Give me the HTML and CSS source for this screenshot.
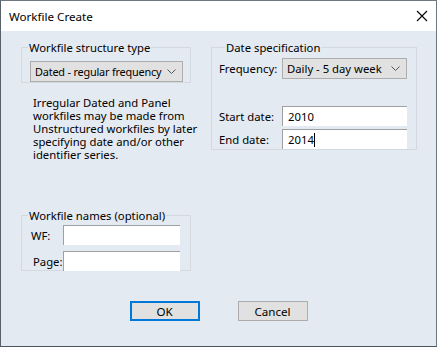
FILE: index.html
```html
<!DOCTYPE html>
<html lang="en">
<head>
  <meta charset="UTF-8">
  <title>Workfile Create</title>
  <link rel="stylesheet" href="styles.css">
</head>
<body>
  <div class="window">
    <div class="titlebar">
      <span class="title">Workfile Create</span>
      <svg class="close" width="12" height="12" viewBox="0 0 12 12">
        <path d="M1 1 L11 11 M11 1 L1 11" stroke="#000" stroke-width="1.1" fill="none"/>
      </svg>
    </div>

    <div class="content">
      <div class="top">
        <div class="left">
          <fieldset class="group structure">
            <legend>Workfile structure type</legend>
            <div class="combo wide">
              <span>Dated - regular frequency</span>
              <svg width="9" height="5" viewBox="0 0 9 5"><path d="M0.5 0.5 L4.5 4.5 L8.5 0.5" stroke="#555" fill="none"/></svg>
            </div>
          </fieldset>
          <p class="note">Irregular Dated and Panel<br>workfiles may be made from<br>Unstructured workfiles by later<br>specifying date and/or other<br>identifier series.</p>
        </div>

        <fieldset class="group dates">
          <legend>Date specification</legend>
          <div class="row">
            <label>Frequency:</label>
            <div class="combo freq">
              <span>Daily - 5 day week</span>
              <svg width="9" height="5" viewBox="0 0 9 5"><path d="M0.5 0.5 L4.5 4.5 L8.5 0.5" stroke="#555" fill="none"/></svg>
            </div>
          </div>
          <div class="row start">
            <label>Start date:</label>
            <div class="edit date">2010</div>
          </div>
          <div class="row end">
            <label>End date:</label>
            <div class="edit date">2014<span class="caret"></span></div>
          </div>
        </fieldset>
      </div>

      <fieldset class="group names">
        <legend>Workfile names (optional)</legend>
        <div class="row">
          <label class="wf">WF:</label>
          <div class="edit name"></div>
        </div>
        <div class="row page">
          <label class="pg">Page:</label>
          <div class="edit name"></div>
        </div>
      </fieldset>

      <div class="buttons">
        <button class="btn default">OK</button>
        <button class="btn">Cancel</button>
      </div>
    </div>
  </div>
</body>
</html>
```

FILE: styles.css
```css
body {
  margin: 0;
  font-family: 'Noto Sans', 'Liberation Sans', sans-serif;
  font-size: 11.3px;
  color: #000;
}

.window {
  width: 437px;
  height: 347px;
  box-sizing: border-box;
  border: 1px solid #6f7780;
  border-bottom-color: #4a5560;
  border-left-color: #56616c;
  background: #e4eaf2;
  display: flex;
  flex-direction: column;
}

.titlebar {
  height: 30px;
  background: #ffffff;
  display: flex;
  align-items: center;
  justify-content: space-between;
  padding: 0 8px 0 8px;
  flex-shrink: 0;
}

.title {
  font-size: 11.6px;
  color: #000;
}

.content {
  padding: 9px 0 0 20px;
  display: flex;
  flex-direction: column;
}

.top {
  display: flex;
  height: 154px;
}

.left {
  width: 170px;
}

fieldset.group {
  margin: 0;
  border: 1px solid #d3d9df;
  padding: 0;
  min-width: 0;
}

fieldset.group legend {
  padding: 0 1px;
  margin-left: 6px;
  line-height: 15px;
  white-space: nowrap;
}

.structure {
  width: 170px;
  height: 43px;
  box-sizing: border-box;
}

.combo {
  height: 21px;
  box-sizing: border-box;
  background: #e1e1e1;
  border: 1px solid #adadad;
  display: flex;
  align-items: center;
  justify-content: space-between;
  padding: 0 6px 0 4px;
  white-space: nowrap;
}

.combo.wide {
  width: 153px;
  margin: 6px 0 0 8px;
  font-size: 10.9px;
  letter-spacing: -0.2px;
}

.combo.freq {
  width: 125px;
}

.note {
  margin: 13px 0 0 12px;
  line-height: 13px;
  white-space: nowrap;
}

.dates {
  width: 206px;
  height: 110px;
  box-sizing: border-box;
  margin-left: 20px !important;
  padding: 0 8px 0 7px !important;
}

.row {
  display: flex;
  align-items: center;
}

.row label {
  width: 63px;
  white-space: nowrap;
}

.dates .row:first-of-type {
  margin-top: 3px;
}

.row.start {
  margin-top: 27px;
}

.row.end {
  margin-top: 3px;
}

.edit {
  background: #ffffff;
  border-top: 1px solid #a0a0a0;
  border-left: 1px solid #a0a0a0;
  box-sizing: border-box;
  display: flex;
  align-items: center;
  padding-left: 5px;
}

.edit.date {
  width: 125px;
  height: 20px;
}

.caret {
  display: inline-block;
  width: 1px;
  height: 14px;
  background: #000;
}

.names {
  width: 170px;
  height: 63px;
  box-sizing: border-box;
  margin-top: 14px !important;
}

.names .row {
  margin-top: 2px;
}

.names .row.page {
  margin-top: 6px;
}

.names label.wf {
  width: 32px;
  padding-left: 9px;
}

.names label.pg {
  width: 30px;
  padding-left: 11px;
}

.edit.name {
  width: 117px;
  height: 20px;
}

.buttons {
  display: flex;
  justify-content: center;
  gap: 38px;
  margin-top: 30px;
  margin-left: -20px;
}

.btn {
  width: 70px;
  height: 20px;
  font-family: inherit;
  font-size: 11.6px;
  background: #e1e1e1;
  border: 1px solid #adadad;
  padding: 0;
  color: #000;
}

.btn.default {
  border: 2px solid #0078d7;
}
```
